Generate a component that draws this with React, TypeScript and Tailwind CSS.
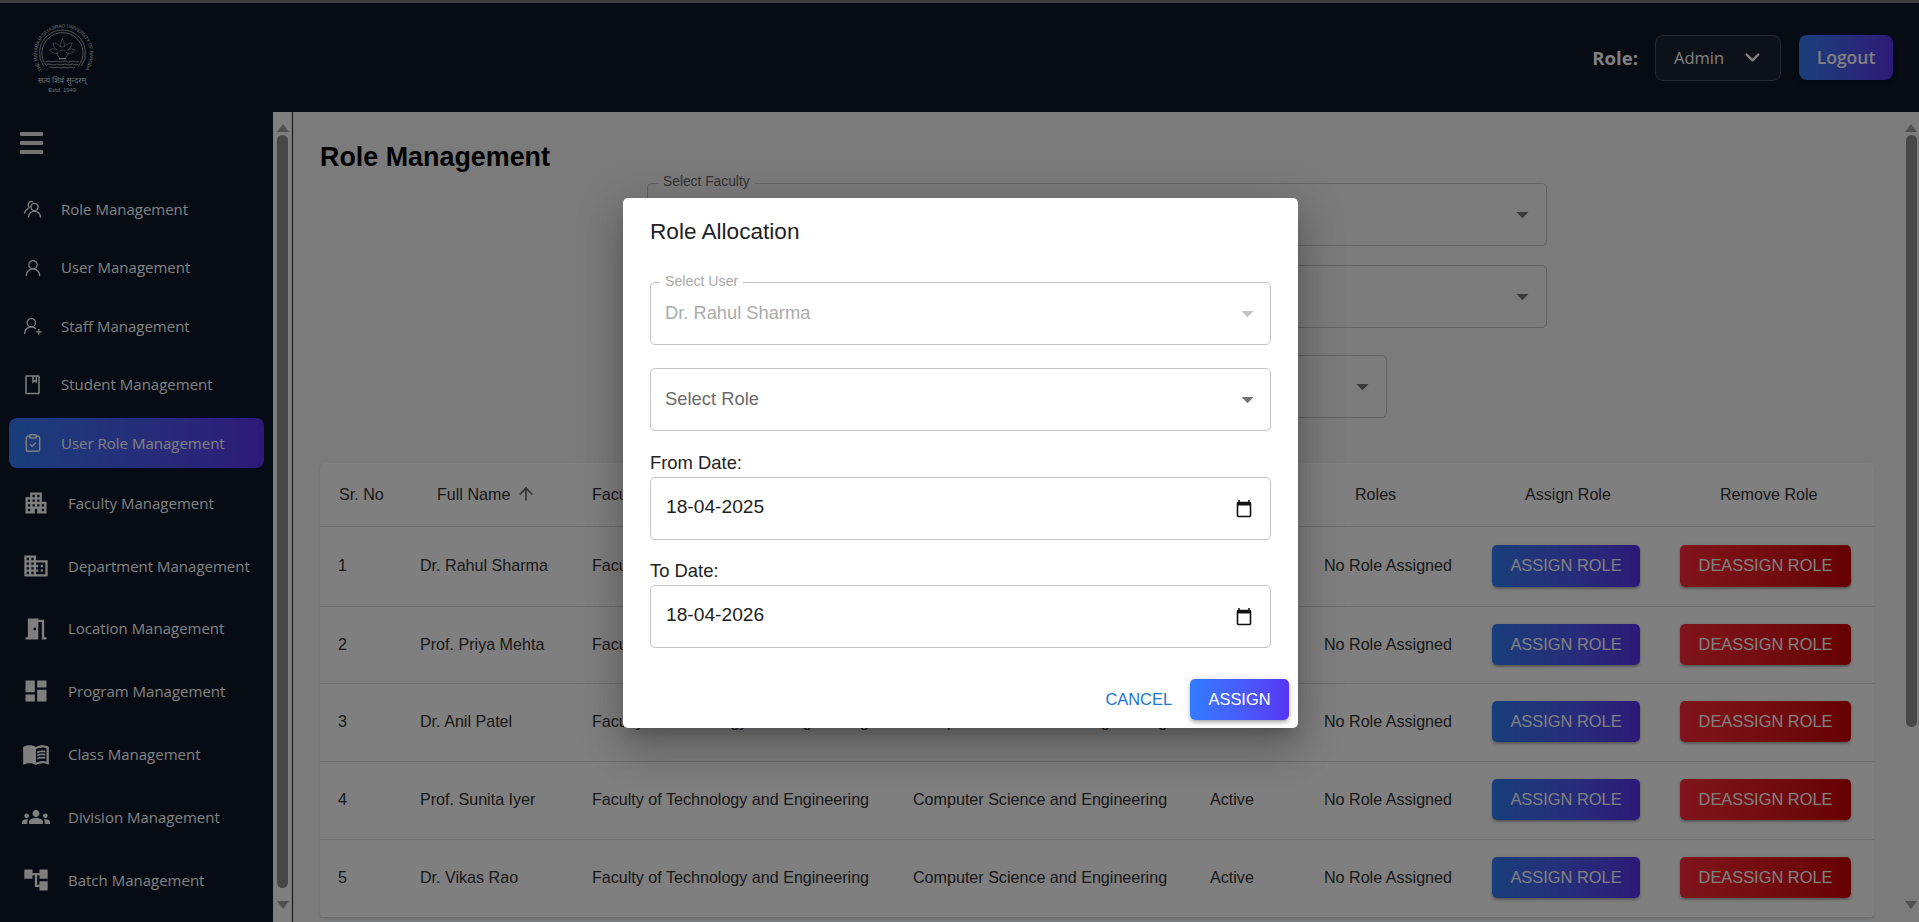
import { ChevronDown, ClipboardCheck, UserRound, UserRoundPlus, ArrowUp } from 'lucide-react';
import { MdAccountTree, MdApartment, MdArrowDropDown, MdDashboard, MdDomain, MdGroups, MdMeetingRoom, MdMenuBook } from 'react-icons/md';

const RoleIcon = () => (
  <svg width="20" height="20" viewBox="0 0 20 20" fill="none" stroke="currentColor" strokeWidth="1.4" strokeLinecap="round">
    <circle cx="11.5" cy="8" r="3.6" />
    <path d="M5.5 18c.4-3.4 2.8-5.6 6-5.6s5.600 2.200 6 5.600" />
    <path d="M9.500 2.600A3.500 3.500 0 0 0 5.200 6c0 1 .4 1.800 1 2.400" />
    <path d="M1.500 14c.5-2 1.700-3.600 3.500-4.400" />
  </svg>
);

const StudentIcon = () => (
  <svg width="20" height="22" viewBox="0 0 20 22" fill="none" stroke="currentColor" strokeWidth="1.5">
    <rect x="3" y="2" width="13" height="17.500" rx="0.500" />
    <path d="M10 2v6l1.700-1.300L13.400 8V2" />
  </svg>
);

const Logo = () => (
  <svg width="70" height="76" viewBox="28 20 70 76" fill="none" className="text-[#dcdcdc]">
    <defs>
      <path id="ring" d="M42.400 70 A26.500 26.500 0 1 1 84.600 70" />
    </defs>
    <text fontSize="4.800" fill="currentColor" fontFamily="Liberation Sans, sans-serif">
      <textPath href="#ring" textLength="116">THE MAHARAJA SAYAJIRAO UNIVERSITY OF BARODA</textPath>
    </text>
    <g stroke="currentColor" strokeWidth="0.700">
      <path d="M43.500 66 A23 23 0 1 1 81.500 66" />
      <path d="M46.600 66 A20.500 20.500 0 1 1 78.400 66" />
      <g transform="translate(62.500 50) scale(0.72) translate(-64 -47)">
        <path d="M64 31c-2 5-3 8-3 11 1 1 5 1 6 0 0-3-1-6-3-11z" />
        <path d="M61 42c-4-4-7-5-10-5 0 4 2 8 6 10" />
        <path d="M67 42c4-4 7-5 10-5 0 4-2 8-6 10" />
        <path d="M57 47c-4-2-8-2-11 0 2 3 6 5 11 5" />
        <path d="M71 47c4-2 8-2 11 0-2 3-6 5-11 5" />
        <path d="M57 52c0 4 3 7 7 7s7-3 7-7c-2-3-4-5-7-5s-5 2-7 5z" />
        <path d="M59 59h10" strokeWidth="1.600" />
      </g>
      <path d="M46 61.500c3-1.500 5 1.500 8.200 0s5 1.500 8.200 0 5 1.500 8.200 0 5 1.500 8.200 0" />
      <path d="M47 64.500c3-1.500 5 1.500 7.800 0s5 1.500 7.800 0 5 1.500 7.800 0 5 1.500 7.600 0" />
      <path d="M50 67.500c3-1 4 1 6.200 0s4 1 6.200 0 4 1 6.200 0 4 1 6.200 0" />
    </g>
    <text x="62" y="82.500" textAnchor="middle" fontSize="8" fill="currentColor" fontFamily="Noto Sans, Noto Sans CJK SC, sans-serif">सत्यं शिवं सुन्दरम्</text>
    <text x="62" y="91.500" textAnchor="middle" fontSize="5.800" fill="currentColor" fontFamily="Liberation Sans, sans-serif">Estd. 1949</text>
  </svg>
);

const firstGroup = [
  { label: 'Role Management', icon: <RoleIcon /> },
  { label: 'User Management', icon: <UserRound size={20} strokeWidth={1.500} /> },
  { label: 'Staff Management', icon: <UserRoundPlus size={20} strokeWidth={1.500} /> },
  { label: 'Student Management', icon: <StudentIcon /> },
  { label: 'User Role Management', icon: <ClipboardCheck size={20} strokeWidth={1.800} />, active: true },
];

const secondGroup = [
  { label: 'Faculty Management', icon: MdApartment },
  { label: 'Department Management', icon: MdDomain },
  { label: 'Location Management', icon: MdMeetingRoom },
  { label: 'Program Management', icon: MdDashboard },
  { label: 'Class Management', icon: MdMenuBook },
  { label: 'Division Management', icon: MdGroups },
  { label: 'Batch Management', icon: MdAccountTree },
];

const users = ['Dr. Rahul Sharma', 'Prof. Priya Mehta', 'Dr. Anil Patel', 'Prof. Sunita Iyer', 'Dr. Vikas Rao'];

const tableCols = 'grid grid-cols-[82px_172px_321px_297px_114px_166px_188px_214px] items-center';

const rowHeights = ['h-[80px]', 'h-[77px]', 'h-[78px]', 'h-[78px]', 'h-[78px]'];

// windows style scrollbar, the native one doesn't show up in the headless browser
const ScrollBar = ({ thumbClass, trackClass }: { thumbClass: string; trackClass: string }) => (
  <div className={`flex flex-col items-center shrink-0 ${trackClass}`}>
    <div className="h-[23px] flex items-end pb-[3px]">
      <div className="w-0 h-0 border-x-[6px] border-x-transparent border-b-[8px] border-b-[#a0a0a0]" />
    </div>
    <div className={`w-[11px] rounded-full bg-[#8f8f8f] ${thumbClass}`} />
    <div className="flex-1" />
    <div className="h-[22px] flex items-start pt-[1px]">
      <div className="w-0 h-0 border-x-[6px] border-x-transparent border-t-[8px] border-t-[#a0a0a0]" />
    </div>
  </div>
);

const OutlineField = ({ label, widthClass, className = '' }: { label: string; widthClass: string; className?: string }) => (
  <div className={`relative h-[63px] mx-auto border border-[#c4c4c4] rounded-[5px] flex items-center justify-end pr-[9px] ${widthClass} ${className}`}>
    <span className="absolute -top-[10px] left-[10px] px-[5px] bg-[#f6f7f9] text-[13.800px] leading-[16px] text-[#666]">{label}</span>
    <MdArrowDropDown size={29} className="text-[#757575]" />
  </div>
);

const CalendarIcon = () => (
  <svg width="18" height="20" viewBox="0 0 18 20" className="text-[#111]">
    <path d="M4 1v3M14 1v3" stroke="currentColor" strokeWidth="1.500" />
    <rect x="2.500" y="3.500" width="13" height="14" rx="1" fill="none" stroke="currentColor" strokeWidth="1.600" />
    <rect x="2.500" y="3" width="13" height="3.500" fill="currentColor" />
  </svg>
);

const DateField = ({ value }: { value: string }) => (
  <div className="h-[63px] border border-[#c4c4c4] rounded-[5px] bg-white flex items-center justify-between pl-[15px] pr-[17px]">
    <span className="text-[19.200px] text-[#222] -mt-[3px]">{value}</span>
    <CalendarIcon />
  </div>
);

export default function App() {
  return (
    <div className="relative h-[922px] w-full overflow-hidden flex flex-col bg-[#f6f7f9] font-['Liberation_Sans',Arial,sans-serif]">
      <div className="h-[3px] shrink-0 bg-[#7c7c7c]" />

      {/* top bar */}
      <header className="h-[109px] shrink-0 bg-[#0c1628] flex items-center justify-between pl-[28px] pr-[26px] font-['Open_Sans',sans-serif]">
        <div className="mt-[1px]">
          <Logo />
        </div>
        <div className="flex items-center">
          <span className="text-[18.600px] font-bold text-white mr-[17px] mt-[1px]">Role:</span>
          <div className="w-[126px] h-[46px] rounded-[8px] bg-[#1a2233] border border-[#4e5564] flex items-center pl-[18px] pr-[16px] justify-between text-white">
            <span className="text-[16.500px] mt-[1px]">Admin</span>
            <ChevronDown size={23} strokeWidth={2.500} />
          </div>
          <button className="ml-[18px] w-[94px] h-[45px] rounded-[8px] bg-gradient-to-r from-[#2f7bf5] to-[#5a33f0] text-white text-[17.500px] font-semibold shadow-md">
            Logout
          </button>
        </div>
      </header>

      <div className="flex-1 flex min-h-0">
        {/* sidebar */}
        <aside className="w-[273px] shrink-0 bg-[#0c1628] text-white font-['Open_Sans',sans-serif]">
          <div className="ml-[20px] mt-[20px] w-[23px] flex flex-col gap-[5px]">
            <div className="h-[4px] bg-white/90 rounded-[1px]" />
            <div className="h-[4px] bg-white/90 rounded-[1px]" />
            <div className="h-[4px] bg-white/90 rounded-[1px]" />
          </div>
          <nav className="mt-[30px] mx-[9px] flex flex-col">
            <div className="flex flex-col gap-[8.500px]">
              {firstGroup.map((item) => (
                <div
                  key={item.label}
                  className={`h-[50px] flex items-center pl-[14px] rounded-[8px] ${item.active ? 'bg-gradient-to-r from-[#2f7bf5] to-[#5a33f0]' : ''}`}
                >
                  <span className="w-[38px] flex">{item.icon}</span>
                  <span className="text-[15px]">{item.label}</span>
                </div>
              ))}
            </div>
            <div className="mt-[10px] flex flex-col gap-[12.800px]">
              {secondGroup.map((item) => (
                <div key={item.label} className="h-[50px] flex items-center pl-[13px]">
                  <span className="w-[46px] flex">
                    <item.icon size={28} />
                  </span>
                  <span className="text-[15px]">{item.label}</span>
                </div>
              ))}
            </div>
          </nav>
        </aside>
        <ScrollBar trackClass="w-[19px] bg-[#fdfdfd]" thumbClass="h-[753px]" />
        <div className="w-px shrink-0 bg-[#222]" />

        {/* page */}
        <main className="flex-1 min-w-0 pl-[27px] pr-[29px] pt-[29px] overflow-hidden">
          <h1 className="text-[26.880px] leading-[32px] font-bold text-black">Role Management</h1>
          <OutlineField label="Select Faculty" widthClass="w-[900px]" className="mt-[10px]" />
          <OutlineField label="Select Department" widthClass="w-[900px]" className="mt-[19px]" />
          <OutlineField label="Select Program" widthClass="w-[580px]" className="mt-[27px]" />

          <div className="mt-[45px] rounded-[5px] bg-white shadow-[0_1px_3px_rgba(0,0,0,0.1)] text-[16.100px] text-[#333]">
            <div className={`${tableCols} h-[64px] border-b border-[#ddd]`}>
              <div className="pl-[19px]">Sr. No</div>
              <div className="pl-[35px] flex items-center gap-[6px]">
                Full Name <ArrowUp size={20} className="text-[#666]" />
              </div>
              <div className="pl-[18px]">Faculty</div>
              <div className="pl-[18px]">Department</div>
              <div className="pl-[18px]">Status</div>
              <div className="pl-[49px]">Roles</div>
              <div className="pl-[53px]">Assign Role</div>
              <div className="pl-[60px]">Remove Role</div>
            </div>
            {users.map((name, i) => (
              <div key={name} className={`${tableCols} border-b border-[#ddd] pb-[2px] ${rowHeights[i]}`}>
                <div className="pl-[18px]">{i + 1}</div>
                <div className="pl-[18px]">{name}</div>
                <div className="pl-[18px]">Faculty of Technology and Engineering</div>
                <div className="pl-[18px]">Computer Science and Engineering</div>
                <div className="pl-[18px]">Active</div>
                <div className="pl-[18px]">No Role Assigned</div>
                <div className="pl-[20px]">
                  <button className={`w-[148px] rounded-[5px] bg-gradient-to-r from-[#2f7bf5] to-[#5a33f0] text-white text-[16.400px] shadow-[0_2px_2px_-1px_rgba(0,0,0,0.2),0_2px_3px_0_rgba(0,0,0,0.14),0_1px_5px_0_rgba(0,0,0,0.12)] ${i === 0 ? 'h-[42px]' : 'h-[41px]'}`}>
                    ASSIGN ROLE
                  </button>
                </div>
                <div className="pl-[20px]">
                  <button className={`w-[171px] rounded-[5px] bg-gradient-to-r from-[#ff2a38] to-[#cc0000] text-white text-[16.400px] shadow-[0_2px_2px_-1px_rgba(0,0,0,0.2),0_2px_3px_0_rgba(0,0,0,0.14),0_1px_5px_0_rgba(0,0,0,0.12)] ${i === 0 ? 'h-[42px]' : 'h-[41px]'}`}>
                    DEASSIGN ROLE
                  </button>
                </div>
              </div>
            ))}
          </div>
        </main>
        <ScrollBar trackClass="w-[16px] bg-[#f6f7f9]" thumbClass="h-[592px]" />
      </div>

      {/* dialog */}
      <div className="absolute inset-0 bg-black/50 flex items-center justify-center">
        <div className="w-[675px] h-[530px] mt-[4px] ml-[2px] rounded-[5px] bg-white pt-[19px] shadow-[0_11px_15px_-7px_rgba(0,0,0,0.2),0_24px_38px_3px_rgba(0,0,0,0.14),0_9px_46px_8px_rgba(0,0,0,0.12)]">
          <div className="px-[27px]">
            <h2 className="text-[22.600px] leading-[30px] text-[#222]">Role Allocation</h2>

            <div className="relative mt-[35px] h-[63px] border border-[#c4c4c4] rounded-[5px] flex items-center justify-between pl-[14px] pr-[8px]">
              <span className="absolute -top-[10px] left-[9px] px-[5px] bg-white text-[14.200px] leading-[16px] text-[#a8a8a8]">Select User</span>
              <span className="text-[18.300px] text-[#ababab] -mt-[2px]">Dr. Rahul Sharma</span>
              <MdArrowDropDown size={29} className="text-[#c4c4c4]" />
            </div>

            <div className="mt-[23px] h-[63px] border border-[#c4c4c4] rounded-[5px] flex items-center justify-between pl-[14px] pr-[8px]">
              <span className="text-[18.400px] text-[#6b6b6b] -mt-[2px]">Select Role</span>
              <MdArrowDropDown size={29} className="text-[#757575]" />
            </div>

            <div className="mt-[21px] text-[18.400px] leading-[22px] text-[#222]">From Date:</div>
            <div className="mt-[3px]">
              <DateField value="18-04-2025" />
            </div>

            <div className="mt-[20px] text-[18.400px] leading-[22px] text-[#222]">To Date:</div>
            <div className="mt-[3px]">
              <DateField value="18-04-2026" />
            </div>
          </div>

          <div className="mt-[31px] pr-[9px] flex items-center justify-end gap-[18px]">
            <button className="text-[16.400px] text-[#1976d2]">CANCEL</button>
            <button className="w-[99px] h-[41px] rounded-[5px] bg-gradient-to-r from-[#2f7bff] to-[#5535f5] text-white text-[16.400px] shadow-[0_3px_3px_-2px_rgba(0,0,0,0.2),0_3px_4px_0_rgba(0,0,0,0.14),0_1px_8px_0_rgba(0,0,0,0.12)]">
              ASSIGN
            </button>
          </div>
        </div>
      </div>
    </div>
  );
}
